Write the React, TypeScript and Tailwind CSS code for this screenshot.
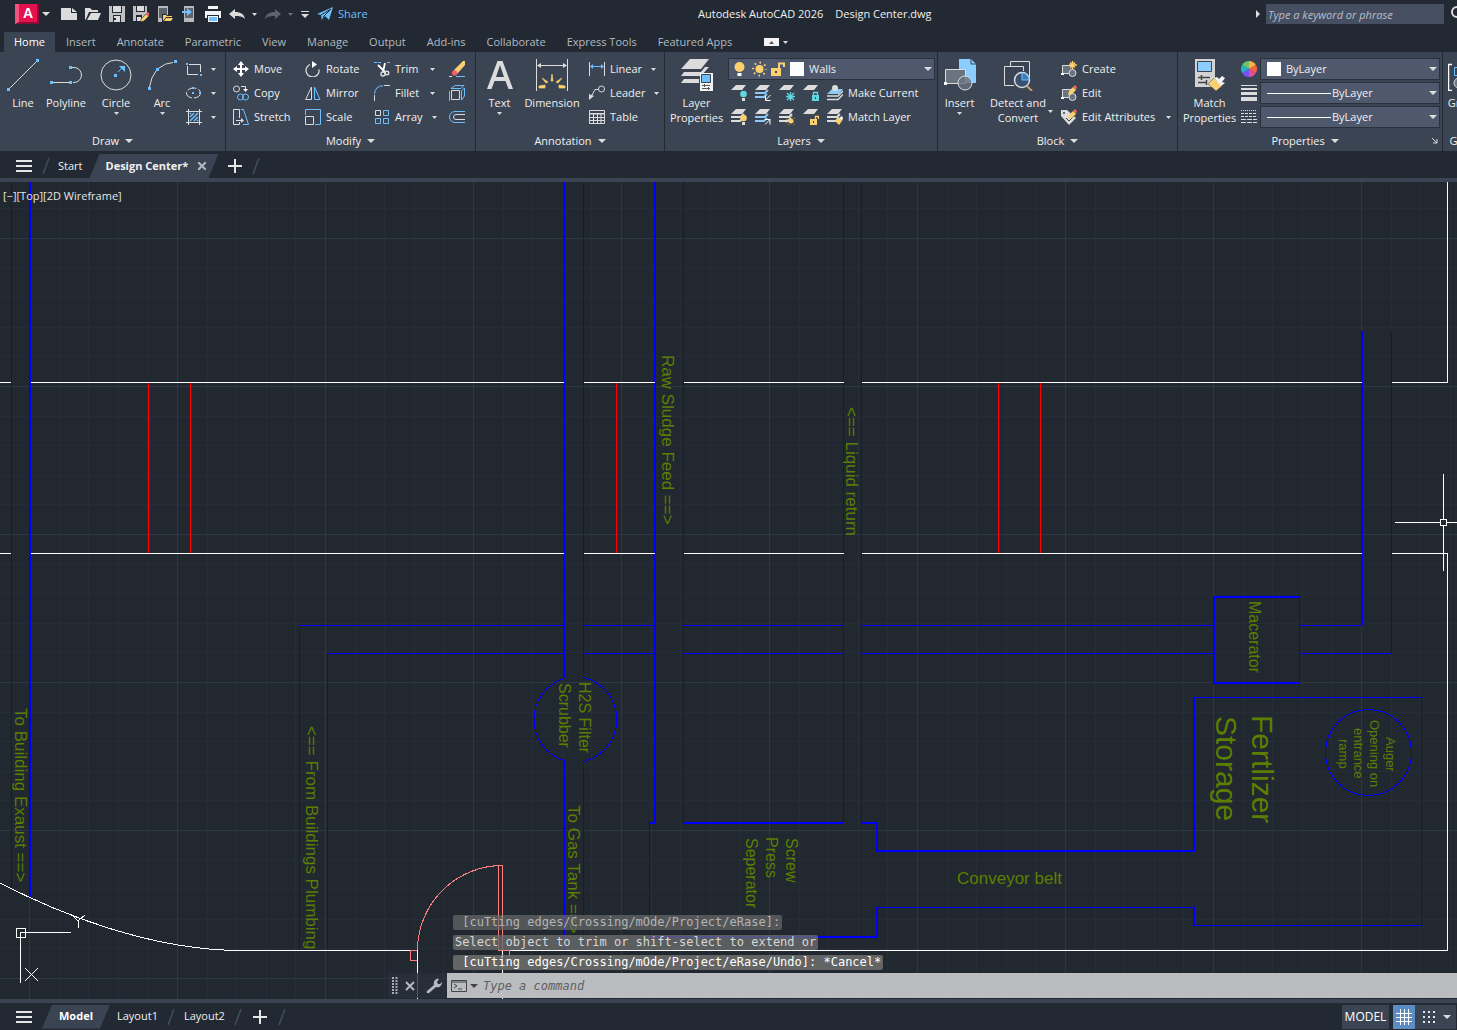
import type { ReactNode } from "react";

const W = "#dcdcdc";
const B = "#6cc0ff";
const Y = "#fcd06f";

function Svg({
	w = 16,
	h = 16,
	children,
	className = "",
}: {
	w?: number;
	h?: number;
	children: ReactNode;
	className?: string;
}) {
	return (
		<svg
			aria-hidden="true"
			width={w}
			height={h}
			viewBox={`0 0 ${w} ${h}`}
			fill="none"
			className={`shrink-0 ${className}`}
		>
			{children}
		</svg>
	);
}

function Caret({ big = false, dim = false }: { big?: boolean; dim?: boolean }) {
	const fill = dim ? "#6d737c" : W;
	return big ? (
		<Svg w={8} h={4}>
			<path d="M0 0h8L4 4z" fill={fill} />
		</Svg>
	) : (
		<Svg w={5} h={3}>
			<path d="M0 0h5L2.500 3z" fill={fill} />
		</Svg>
	);
}

/* ---------- title bar icons ---------- */

const quickIcons: { label: string; icon: ReactNode; caret?: "on" | "off" }[] = [
	{
		label: "New",
		icon: <path d="M0 2h10v5h6v7H0zM11 2l5 4h-5z" fill={W} />,
	},
	{
		label: "Open",
		icon: <path d="M0 14V2h5l2 2h6v2H4l-3 7zM2 14l4-7h10l-3 7z" fill={W} />,
	},
	{
		label: "Save",
		icon: (
			<>
				<path d="M0 0h16v16H0z" fill="#c0c0c2" />
				<path d="M3 0h10v7H3zM4 9h8v7H4z" fill="#222933" />
				<path d="M4 0h8v6H4zM5 10h6v6H5z" fill={W} />
				<path d="M5 12h2v2H5z" fill="#222933" />
			</>
		),
	},
	{
		label: "Save As",
		icon: (
			<>
				<path d="M0 0h14v8l-6 7H0z" fill="#c0c0c2" />
				<path d="M3 0h9v6H3zM3 9h6v6H3z" fill="#222933" />
				<path d="M4 0h7v5H4zM4 11h4v4H4z" fill={W} />
				<path d="M8 13l5-5 3 2-5 5-3 1z" fill={Y} stroke="#222933" strokeWidth=".6" />
				<path d="M13 8l2-2 2 2-1 2z" fill="#f2665c" />
			</>
		),
	},
	{
		label: "Open from Web and Mobile",
		icon: (
			<>
				<path d="M1 0h10v16H1z" fill="#b9b9bb" />
				<path d="M2 2h8v10H2z" fill="#5d636d" />
				<path d="M5 8h4l1 1h6v7H5z" fill="#222933" />
				<path d="M6 15V9h3l1 1h5v1H9zM7 15l2-3h7l-2 3z" fill={Y} />
			</>
		),
	},
	{
		label: "Save to Web and Mobile",
		icon: (
			<>
				<path d="M3 0h10v16H3z" fill="#b9b9bb" />
				<path d="M4 2h8v10H4z" fill="#5d636d" />
				<path d="M1 5h5V2l5 4-5 4V7H1z" fill={B} />
			</>
		),
	},
	{
		label: "Plot",
		icon: (
			<>
				<path d="M3 0h10v3H3zM0 5h16v7h-2V9H2v3H0z" fill="#f4f4f4" />
				<path d="M3 10h10v6H3z" fill="#f4f4f4" />
				<path d="M4 11h8v4H4z" fill={B} />
			</>
		),
	},
	{
		label: "Undo",
		icon: <path d="M0 8l6-5v3c6 0 9 2 10 7-3-3-6-3-10-3v3z" fill={W} />,
		caret: "on",
	},
	{
		label: "Redo",
		icon: <path d="M16 8l-6-5v3C4 6 1 8 0 13c3-3 6-3 10-3v3z" fill="#5d636d" />,
		caret: "off",
	},
];

function TitleBar() {
	return (
		<header className="flex h-8 items-start bg-[#222933] text-[#f0f0f0]">
			<div className="flex h-7 flex-13 items-center pl-[15px]">
				<button type="button" aria-label="Application menu" className="flex items-center gap-[3px]">
					<span className="flex h-5 w-6 items-center justify-center border-r-2 border-b-2 border-l-4 border-r-[#8c0b36] border-b-[#8c0b36] border-l-[#f0547d] bg-[#e51050] font-['Liberation_Sans'] text-sm leading-4 font-bold text-white">
						A
					</span>
					<Caret big />
				</button>
				<div className="ml-[11px] flex items-center gap-2">
					{quickIcons.map(({ label, icon, caret }) => (
						<button
							key={label}
							type="button"
							aria-label={label}
							className="flex items-center gap-[7px]"
						>
							<Svg>{icon}</Svg>
							{caret && <Caret dim={caret === "off"} />}
						</button>
					))}
					<button type="button" aria-label="Customize toolbar">
						<Svg w={8} h={7}>
							<path d="M0 0h8v1H0zM0 3h8L4 7z" fill={W} />
						</Svg>
					</button>
					<button type="button" className="flex items-center gap-[5px] text-[11px] text-[#6cc0ff]">
						<Svg>
							<path d="M0 8L16 1l-4 13-4-4-3 5-1-6z" fill={B} />
							<path d="M4 9l10-6-7 7-2 5" stroke="#222933" />
						</Svg>
						Share
					</button>
				</div>
			</div>
			<p className="flex h-7 shrink-0 items-center gap-3 text-[11px] whitespace-nowrap">
				<span>Autodesk AutoCAD 2026</span>
				<span>Design Center.dwg</span>
			</p>
			<div className="flex h-7 flex-10 items-center justify-end gap-1.5">
				<Svg w={4} h={8}>
					<path d="M0 0l4 4-4 4z" fill={W} />
				</Svg>
				<input
					aria-label="Search"
					placeholder="Type a keyword or phrase"
					className="h-5 w-[178px] bg-[#464e61] px-0.5 text-[11px] italic outline-none placeholder:text-[#b9bfc9]"
				/>
				<Svg w={7}>
					<circle cx="7" cy="6" r="5" stroke={W} strokeWidth="2" />
				</Svg>
			</div>
		</header>
	);
}

const ribbonTabs = [
	"Insert",
	"Annotate",
	"Parametric",
	"View",
	"Manage",
	"Output",
	"Add-ins",
	"Collaborate",
	"Express Tools",
	"Featured Apps",
];

function RibbonTabs() {
	return (
		<nav className="flex h-5 shrink-0 bg-[#222933] pl-1 text-[11px] text-[#b4b9c0]">
			<button type="button" className="w-[51px] bg-[#3b4453] text-white">
				Home
			</button>
			<div className="ml-[11px] flex gap-[21px]">
				{ribbonTabs.map((tab) => (
					<button key={tab} type="button">
						{tab}
					</button>
				))}
			</div>
			<button type="button" aria-label="Minimize ribbon" className="ml-8 flex items-center gap-1">
				<Svg w={15} h={8}>
					<path d="M0 0h15v8H0z" fill="#f4f4f4" />
					<path d="M5 6h5L7.500 3z" fill="#555" />
				</Svg>
				<Caret />
			</button>
		</nav>
	);
}

/* ---------- ribbon building blocks ---------- */

function Panel({
	title,
	width,
	launcher = false,
	children,
}: {
	title: string;
	width: string;
	launcher?: boolean;
	children: ReactNode;
}) {
	return (
		<section
			className={`flex shrink-0 flex-col border-r border-[#222933] pt-[5px] text-[11px] ${width}`}
		>
			<div className="flex h-[72px] shrink-0">{children}</div>
			<button
				type="button"
				className={`relative flex h-6 shrink-0 items-center justify-center gap-1.5 ${launcher ? "pr-2.5" : ""}`}
			>
				{title}
				<Caret big />
				{launcher && (
					<Svg w={6} h={6} className="absolute right-1">
						<path d="M0 0l5 5M5 1v4H1" stroke={W} />
					</Svg>
				)}
			</button>
		</section>
	);
}

function BigButton({
	icon,
	lines,
	width,
	caret = false,
	sideCaret = false,
}: {
	icon: ReactNode;
	lines: string[];
	width: string;
	caret?: boolean;
	sideCaret?: boolean;
}) {
	return (
		<button
			type="button"
			className={`relative flex shrink-0 flex-col items-center pt-0.5 ${width}`}
		>
			<Svg w={32} h={32}>
				{icon}
			</Svg>
			<span className="mt-1 leading-[15px]">
				{lines.map((line) => (
					<span key={line} className="block whitespace-nowrap">
						{line}
					</span>
				))}
			</span>
			{caret && (
				<span className="mt-0.5">
					<Caret />
				</span>
			)}
			{sideCaret && (
				<span className="absolute right-0.5 bottom-4">
					<Caret />
				</span>
			)}
		</button>
	);
}

function Tool({
	icon,
	label,
	hint,
	caret = false,
}: {
	icon: ReactNode;
	label?: string;
	hint?: string;
	caret?: boolean;
}) {
	return (
		<button
			type="button"
			aria-label={hint}
			className="flex h-6 items-center gap-[5px] whitespace-nowrap"
		>
			<Svg>{icon}</Svg>
			{label}
			{caret && (
				<span className="ml-auto pl-1">
					<Caret />
				</span>
			)}
		</button>
	);
}

function Stack({ width, children }: { width: string; children: ReactNode }) {
	return <div className={`flex shrink-0 flex-col ${width}`}>{children}</div>;
}

function Combo({
	label,
	value,
	children,
}: {
	label: string;
	value: string;
	children: ReactNode;
}) {
	return (
		<label className="flex h-[22px] flex-1 items-center gap-[3px] border border-[#2a313c] bg-[#4e596e] px-1">
			{children}
			<select
				aria-label={label}
				className="min-w-0 flex-1 appearance-none bg-transparent text-[11px] outline-none"
			>
				<option>{value}</option>
			</select>
			<span className="-mr-0.5">
				<Caret big />
			</span>
		</label>
	);
}

/* ---------- ribbon panels ---------- */

function DrawPanel() {
	return (
		<Panel title="Draw" width="w-[226px]">
			<BigButton
				width="w-[46px]"
				lines={["Line"]}
				icon={
					<>
						<path d="M3 29L29 3" stroke={W} />
						<path d="M0 29h3v3H0zM29 0h3v3h-3z" fill={B} />
					</>
				}
			/>
			<BigButton
				width="w-10"
				lines={["Polyline"]}
				icon={
					<>
						<path d="M3 23.500h16M22 8.500h2a7.500 7.500 0 0 1 0 15h-1" stroke={W} />
						<path d="M0 22h3v3H0zM19 22h3v3h-3zM19 7h3v3h-3z" fill={B} />
					</>
				}
			/>
			<BigButton
				width="w-[60px]"
				lines={["Circle"]}
				caret
				icon={
					<>
						<circle cx="16" cy="16" r="15" stroke={W} />
						<path d="M18 13l5-5" stroke={B} />
						<path d="M19 7h6v6zM14 15h3v3h-3z" fill={B} />
					</>
				}
			/>
			<BigButton
				width="w-8"
				lines={["Arc"]}
				caret
				icon={
					<>
						<path d="M3.500 28Q5 18 10 12M13 9Q19 4 27 3.500" stroke={W} />
						<path d="M2 28h3v3H2zM10 9h3v3h-3zM28 1h3v3h-3z" fill={B} />
					</>
				}
			/>
			<div className="ml-2 w-7">
				<Tool
					hint="Rectangle"
					caret
					icon={
						<>
							<path d="M3 3.500h11.500V11M12 13.500H1.500V5" stroke={W} />
							<path d="M0 2h2v2H0zM14 13h2v2h-2z" fill={B} />
						</>
					}
				/>
				<Tool
					hint="Ellipse"
					caret
					icon={
						<>
							<ellipse cx="7.500" cy="8" rx="7" ry="5" stroke={W} strokeDasharray="9 2" />
							<path d="M6 7h2v2H6zM6 2h2v2H6zM13 7h2v2h-2z" fill={B} />
						</>
					}
				/>
				<Tool
					hint="Hatch"
					caret
					icon={
						<>
							<path d="M2.500 0v16M13.500 0v16M0 2.500h16M0 13.500h16" stroke={W} />
							<path d="M4 8l4-4M4 12l8-8M8 12l4-4M4 5l1-1M11 12l1-1" stroke={B} strokeWidth="1.500" />
						</>
					}
				/>
			</div>
		</Panel>
	);
}

function ModifyPanel() {
	return (
		<Panel title="Modify" width="w-[250px]">
			<Stack width="ml-[7px] w-[72px]">
				<Tool
					label="Move"
					icon={
						<>
							<path d="M8 2v12M2 8h12" stroke="#fff" strokeWidth="2" />
							<path d="M5 4l3-4 3 4zM5 12l3 4 3-4zM4 5L0 8l4 3zM12 5l4 3-4 3z" fill="#fff" />
						</>
					}
				/>
				<Tool
					label="Copy"
					icon={
						<>
							<circle cx="3.500" cy="4" r="3" stroke={W} />
							<circle cx="7.500" cy="12" r="3" stroke={B} />
							<circle cx="12.500" cy="12" r="3" stroke={B} />
							<path d="M8 1.500h4.500V5" stroke={W} />
							<path d="M10 4h5l-2.500 3z" fill="#fff" />
						</>
					}
				/>
				<Tool
					label="Stretch"
					icon={
						<>
							<path d="M6.500 9V.500h-6v15h6V13M3 11.500h6" stroke={W} />
							<path d="M8 9l3 2.500L8 14z" fill={W} />
							<path d="M8 .500h2.500l5 15H10" stroke={B} />
						</>
					}
				/>
			</Stack>
			<Stack width="w-[69px]">
				<Tool
					label="Rotate"
					icon={
						<>
							<path d="M5 3.500a6.500 6.500 0 1 0 9 5" stroke={W} strokeWidth="1.300" />
							<path d="M7 0l5 3.500L7 7z" fill="#fff" />
						</>
					}
				/>
				<Tool
					label="Mirror"
					icon={
						<>
							<path d="M6.500 2v12.500H.700z" stroke={W} />
							<path d="M9.500 2v12.500h5.500z" stroke={B} />
						</>
					}
				/>
				<Tool
					label="Scale"
					icon={
						<>
							<path d="M.500 6V.500h15v15H10" stroke={B} />
							<path d="M.500 7.500h8v8h-8z" stroke={W} />
						</>
					}
				/>
			</Stack>
			<Stack width="w-[61px]">
				<Tool
					label="Trim"
					caret
					icon={
						<>
							<path d="M0 1.500h3M4 1.500h3M13 1.500h3" stroke={B} />
							<path d="M4 4l7 7M11 2L9 11" stroke="#fff" strokeWidth="1.800" />
							<circle cx="9" cy="13" r="2" stroke={W} strokeWidth="1.400" />
							<circle cx="13" cy="12" r="1.800" stroke={W} strokeWidth="1.400" />
						</>
					}
				/>
				<Tool
					label="Fillet"
					caret
					icon={
						<>
							<path d="M.500 9Q1 1 9 .700" stroke={B} />
							<path d="M.500 10v6M10 .500h6" stroke={W} />
						</>
					}
				/>
				<Tool
					label="Array"
					caret
					icon={
						<>
							<path d="M1.500 1.500h5v5h-5z" stroke={W} />
							<path d="M9.500 1.500h5v5h-5zM1.500 9.500h5v5h-5zM9.500 9.500h5v5h-5z" stroke={B} />
						</>
					}
				/>
			</Stack>
			<Stack width="ml-3.5 w-4">
				<Tool
					hint="Erase"
					icon={
						<>
							<path d="M5 9L14 0h2v4L8 13z" fill={Y} />
							<circle cx="5.500" cy="12" r="2.700" fill="#ee5f6b" />
							<path d="M0 15.500h3" stroke={W} />
							<path d="M7 15.500h9" stroke={B} />
						</>
					}
				/>
				<Tool
					hint="Explode"
					icon={
						<>
							<path d="M2.500 5.500h8v9h-8z" stroke={W} />
							<path d="M.500 6v10M2 3.500L6 .500h9l-3 3zM12.500 6L15.500 3v8l-3 4z" stroke={B} />
						</>
					}
				/>
				<Tool
					hint="Offset"
					icon={
						<>
							<path d="M16 2.500H6a5.500 5.500 0 0 0 0 11h10" stroke={B} />
							<path d="M16 5.500H7a2.500 2.500 0 0 0 0 5h9" stroke={W} />
						</>
					}
				/>
			</Stack>
		</Panel>
	);
}

function AnnotationPanel() {
	return (
		<Panel title="Annotation" width="w-[189px]">
			<BigButton
				width="w-[47px]"
				lines={["Text"]}
				caret
				icon={
					<path
						fillRule="evenodd"
						d="M3 30L13.500 2h5L29 30h-4.500l-3-8h-11l-3 8zM12 18h8L16 6z"
						fill={W}
					/>
				}
			/>
			<BigButton
				width="w-[58px]"
				lines={["Dimension"]}
				icon={
					<>
						<path d="M.500 0v32M31.500 0v32M3 6.500h26" stroke={W} />
						<path d="M1 6.500L5 4v5zM31 6.500L27 4v5z" fill={W} />
						<path
							d="M15 22l1-7 1 7zM10 24l-4-5 6 4zM22 24l4-5-6 4zM9 26l-6 1v2h6zM23 26l6 1v2h-6z"
							fill={Y}
							stroke={Y}
							strokeWidth=".700"
						/>
					</>
				}
			/>
			<Stack width="ml-2 w-[66px]">
				<Tool
					label="Linear"
					caret
					icon={
						<>
							<path d="M.500 1v14M15.500 1v14" stroke={W} />
							<path d="M2 5.500h12" stroke={B} />
							<path d="M1 5.500L4 3v5zM15 5.500L12 3v5z" fill={B} />
						</>
					}
				/>
				<Tool
					label="Leader"
					caret
					icon={
						<>
							<circle cx="12.500" cy="4" r="3" stroke={W} />
							<path d="M9 4.500H6L2 12" stroke={W} />
							<path d="M0 9l5 2-5 4z" fill={W} />
						</>
					}
				/>
				<Tool
					label="Table"
					icon={
						<>
							<path
								d="M.500 1.500h15v13H.500zM0 8.500h16M0 11.500h16M4.500 5v9M8.500 5v9M12 5v9"
								stroke={W}
							/>
							<path d="M0 4h16v1.500H0z" fill={W} />
						</>
					}
				/>
			</Stack>
		</Panel>
	);
}

function Sheets({ n = 3, active = false }: { n?: number; active?: boolean }) {
	return (
		<>
			{n > 1 && (
				<path
					d="M0 8h10l3-3M0 12h9l3-3"
					stroke={active ? "#8cc9f5" : W}
					strokeWidth="2"
				/>
			)}
			<path d="M5 0h10l-4 5H0z" fill={W} />
		</>
	);
}

const cyan = "#5fd6e0";

const layerTools: { hint: string; icon: ReactNode }[][] = [
	[
		{
			hint: "Layer off",
			icon: (
				<>
					<Sheets n={1} />
					<circle cx="12.500" cy="9" r="3.300" fill={cyan} />
					<path d="M11 13h3v3h-3z" fill={W} />
				</>
			),
		},
		{
			hint: "Isolate layer",
			icon: (
				<>
					<Sheets active />
					<path d="M15.500 10l-5 5m0-4v4.500h5" stroke="#fff" />
				</>
			),
		},
		{
			hint: "Freeze layer",
			icon: (
				<>
					<Sheets n={1} />
					<path d="M11.500 7v9M7 11.500h9M8 8l7 7M15 8l-7 7" stroke={cyan} strokeWidth="1.300" />
				</>
			),
		},
		{
			hint: "Lock layer",
			icon: (
				<>
					<Sheets n={1} />
					<path d="M9 10h7v6H9z" fill={cyan} />
					<path d="M10.500 10V7.500h4V10" stroke={cyan} strokeWidth="1.300" />
					<path d="M12 12h1v2h-1z" fill="#3b4453" />
				</>
			),
		},
	],
	[
		{
			hint: "Turn all layers on",
			icon: (
				<>
					<Sheets />
					<circle cx="12.500" cy="9" r="3.300" fill={Y} />
					<path d="M11 13h3v3h-3z" fill={W} />
				</>
			),
		},
		{
			hint: "Unisolate layer",
			icon: (
				<>
					<Sheets active />
					<path d="M10 15.500l5-5m0 5v-5h-5" stroke="#fff" />
				</>
			),
		},
		{
			hint: "Thaw all layers",
			icon: (
				<>
					<Sheets />
					<circle cx="12" cy="12" r="4.500" stroke={Y} strokeDasharray="1 2" />
					<circle cx="12" cy="12" r="2.500" fill={Y} />
				</>
			),
		},
		{
			hint: "Unlock layer",
			icon: (
				<>
					<Sheets n={1} />
					<path d="M7 10h7v6H7z" fill={Y} />
					<path d="M12.500 10V7.500h3V10" stroke={Y} strokeWidth="1.300" />
					<path d="M10 12h1v2h-1z" fill="#3b4453" />
				</>
			),
		},
	],
];

function LayersPanel() {
	return (
		<Panel title="Layers" width="w-[273px]">
			<BigButton
				width="w-[63px]"
				lines={["Layer", "Properties"]}
				icon={
					<>
						<path d="M9 0h19l-8 10H0z" fill={W} />
						<path d="M0 17l3-4h17l4-5h4l-8 9zM0 24l3-4h15v4z" fill={W} />
						<path d="M19 14h13v18H19z" fill="#f4f4f4" />
						<path d="M20.500 15.500h9v8h-9z" fill={B} stroke="#3b4453" />
						<path d="M21 26.500h8M21 29.500h8M23.500 25v3M27.500 28v3" stroke="#555" />
					</>
				}
			/>
			<div className="flex flex-1 flex-col pr-0.5">
				<div className="flex h-6 items-center">
					<Combo label="Layer" value="Walls">
						<Svg w={16} h={16}>
							<circle cx="6.500" cy="6" r="5" fill={Y} />
							<path d="M4.500 12h4v3h-4z" fill="#fff" />
						</Svg>
						<Svg w={15} h={16}>
							<circle cx="7.500" cy="8" r="4" fill={Y} />
							<circle
								cx="7.500"
								cy="8"
								r="6.500"
								stroke={Y}
								strokeWidth="2"
								strokeDasharray="1.500 3.600"
								strokeDashoffset=".750"
							/>
						</Svg>
						<Svg w={15} h={16}>
							<path d="M1 7h10v8H1z" fill={Y} />
							<path d="M9 7V2.500h5V6" stroke={Y} strokeWidth="2" />
							<path d="M5 10h2v2H5z" fill="#3b4453" />
						</Svg>
						<span className="mx-0.5 h-3.5 w-3.5 bg-white" />
					</Combo>
				</div>
				<div className="flex gap-2 pl-[3px]">
					{layerTools[0].map((tool) => (
						<Tool key={tool.hint} {...tool} />
					))}
					<Tool
						label="Make Current"
						icon={
							<>
								<path d="M5 4h11l-4 5H0z" fill="#8cc9f5" />
								<path d="M0 11h11l5-5M0 14.500h11l5-5" stroke={W} strokeWidth="1.500" />
								<circle cx="8" cy="3" r="3" fill={W} />
							</>
						}
					/>
				</div>
				<div className="flex gap-2 pl-[3px]">
					{layerTools[1].map((tool) => (
						<Tool key={tool.hint} {...tool} />
					))}
					<Tool
						label="Match Layer"
						icon={
							<>
								<Sheets />
								<path d="M8 12l3-4 4 4-3 4z" fill={Y} />
								<path d="M12 9l3-2 1 2-1 3z" fill="#fff" />
							</>
						}
					/>
				</div>
			</div>
		</Panel>
	);
}

function BlockPanel() {
	const base = (
		<>
			<path d="M1.500 4.500h10v8h-10z" fill="#6b7280" stroke={W} />
			<circle cx="11.500" cy="12" r="3.500" fill="#6b7280" stroke={W} />
			<path d="M0 12h3v2H0z" fill="#fff" />
		</>
	);
	const pencil = (
		<>
			<path d="M7 10l1-4 4-4 3 3-4 4z" fill={Y} />
			<path d="M12 2l2-2 2 2-1 3z" fill="#f2665c" />
		</>
	);
	return (
		<Panel title="Block" width="w-[240px]">
			<BigButton
				width="w-[43px]"
				lines={["Insert"]}
				caret
				icon={
					<>
						<path d="M15 0h12l5 5v19H15z" fill="#8ccdff" />
						<path d="M27 0v5h5" stroke="#3b4453" />
						<path d="M1.500 10.500h20v14h-20z" fill="#6b7280" stroke={W} />
						<circle cx="21" cy="24" r="7" fill="#6b7280" fillOpacity=".8" stroke={W} />
						<path d="M0 23h3v3H0z" fill="#fff" />
					</>
				}
			/>
			<BigButton
				width="w-[74px]"
				lines={["Detect and", "Convert"]}
				sideCaret
				icon={
					<>
						<path d="M12 26.500H2.500v-19h19V12M8.500 7V2.500h19V18" stroke={W} />
						<circle cx="20" cy="21" r="7.500" fill="#365172" stroke={W} strokeWidth="1.500" />
						<path d="M20 21V14a7 7 0 0 1 7 7z" fill="#3f7cb5" stroke={B} />
						<path d="M25 27l5 5" stroke="#c99a62" strokeWidth="2" />
					</>
				}
			/>
			<Stack width="ml-1.5 w-[110px]">
				<Tool
					label="Create"
					icon={
						<>
							{base}
							<path
								d="M11.500 0v8M8 4h8M9 1.500l5 5M14 1.500l-5 5"
								stroke={Y}
								strokeWidth="1.400"
							/>
						</>
					}
				/>
				<Tool
					label="Edit"
					icon={
						<>
							{base}
							{pencil}
						</>
					}
				/>
				<Tool
					label="Edit Attributes"
					caret
					icon={
						<>
							<path d="M0 1h6l9 8-7 7-8-9z" fill={W} />
							<circle cx="3" cy="4" r="1" fill="#3b4453" />
							<path d="M5 9l3 3 5-5" stroke="#3b4453" />
							{pencil}
						</>
					}
				/>
			</Stack>
		</Panel>
	);
}

const wheel = [
	{ d: "M8 8V0A8 8 0 0 1 14.900 4z", fill: "#fbb040" },
	{ d: "M8 8L14.900 4A8 8 0 0 1 14.900 12z", fill: "#f06449" },
	{ d: "M8 8L14.900 12A8 8 0 0 1 8 16z", fill: "#e0508c" },
	{ d: "M8 8V16A8 8 0 0 1 1.100 12z", fill: "#7c4dff" },
	{ d: "M8 8L1.100 12A8 8 0 0 1 1.100 4z", fill: "#23b5c7" },
	{ d: "M8 8L1.100 4A8 8 0 0 1 8 0z", fill: "#6cc46a" },
];

function PropertiesPanel() {
	return (
		<Panel title="Properties" width="w-[265px]" launcher>
			<BigButton
				width="w-[63px]"
				lines={["Match", "Properties"]}
				icon={
					<>
						<path d="M1 0h20v28H1z" fill="#d3d3d3" />
						<path d="M3.500 2.500h14v10h-14z" fill="#8ccdff" stroke="#3b4453" />
						<path d="M4 18.500h12M4 23.500h9M7.500 16v5M12.500 21v5" stroke="#444" strokeWidth="1.500" />
						<path d="M14 25l6-6 8 8-6 5z" fill={Y} stroke="#3b4453" strokeWidth=".5" />
						<path d="M20 19l3-1 2 2 3-3 3 2-3 4 3 1-4 3z" fill="#f4f4f4" />
					</>
				}
			/>
			<div className="flex flex-1 flex-col pr-0.5">
				<div className="flex h-6 items-center gap-[3px]">
					<Svg>
						{wheel.map((slice) => (
							<path key={slice.d} {...slice} />
						))}
					</Svg>
					<Combo label="Object color" value="ByLayer">
						<span className="mx-0.5 h-3.5 w-3.5 bg-white" />
					</Combo>
				</div>
				<div className="flex h-6 items-center gap-[3px]">
					<Svg>
						<path d="M0 .500h16" stroke={W} />
						<path d="M0 3h16v2H0zM0 7h16v3H0zM0 12h16v4H0z" fill={W} />
					</Svg>
					<Combo label="Lineweight" value="ByLayer">
						<Svg w={64} h={1} className="ml-0.5 -mr-0.5">
							<path d="M0 .500h64" stroke="#fff" />
						</Svg>
					</Combo>
				</div>
				<div className="flex h-6 items-center gap-[3px]">
					<Svg>
						<path d="M0 1.500h16" stroke={W} strokeDasharray="1 1" />
						<path d="M0 4.500h16M0 7.500h16" stroke={W} strokeDasharray="3 1" />
						<path d="M0 10.500h16M0 13.500h16" stroke={W} strokeDasharray="5 1" />
					</Svg>
					<Combo label="Linetype" value="ByLayer">
						<Svg w={64} h={1} className="ml-0.5 -mr-0.5">
							<path d="M0 .500h64" stroke="#fff" />
						</Svg>
					</Combo>
				</div>
			</div>
		</Panel>
	);
}

function Ribbon() {
	return (
		<div className="flex h-[99px] shrink-0 overflow-hidden bg-[#3b4453] text-[#f0f0f0]">
			<DrawPanel />
			<ModifyPanel />
			<AnnotationPanel />
			<LayersPanel />
			<BlockPanel />
			<PropertiesPanel />
			<Panel title="Groups" width="w-[66px]">
				<BigButton
					width="w-[42px]"
					lines={["Group"]}
					icon={
						<>
							<path d="M4 5.500H.500v26H4" stroke="#fff" strokeWidth="1.500" />
							<path d="M6.500 8.500h12v8h-12z" stroke={B} />
							<circle cx="11" cy="24" r="5" fill="#6b7280" stroke={W} />
						</>
					}
				/>
			</Panel>
		</div>
	);
}

/* ---------- tab strips ---------- */

function Hamburger() {
	return (
		<Svg>
			<path d="M0 2h16v2H0zM0 7h16v2H0zM0 12h16v2H0z" fill="#e6e6e6" />
		</Svg>
	);
}

function Slash() {
	return (
		<Svg w={8} h={16}>
			<path d="M7 0L1 16" stroke="#444c59" strokeWidth="1.500" />
		</Svg>
	);
}

function Plus() {
	return (
		<Svg w={14} h={14}>
			<path d="M7 0v14M0 7h14" stroke="#e6e6e6" strokeWidth="2" />
		</Svg>
	);
}

const slant = "[clip-path:polygon(10px_0,100%_0,calc(100%-10px)_100%,0_100%)]";

function FileTabs() {
	return (
		<nav className="flex h-[31px] shrink-0 items-end border-b-4 border-[#3b4453] bg-[#222933] pl-4 text-[11px] text-[#f0f0f0]">
			<button type="button" aria-label="Files menu" className="flex h-6 items-center">
				<Hamburger />
			</button>
			<div className="flex h-6 items-center gap-2 pl-2.5">
				<Slash />
				<button type="button">Start</button>
			</div>
			<div className={`ml-[7px] flex h-6 w-[129px] items-center gap-2.5 bg-[#3b4453] pl-4 ${slant}`}>
				<button type="button" className="font-bold whitespace-nowrap">
					Design Center*
				</button>
				<button type="button" aria-label="Close tab">
					<Svg w={8} h={8}>
						<path d="M0 0l8 8M8 0L0 8" stroke="#b4b9c0" strokeWidth="2" />
					</Svg>
				</button>
			</div>
			<div className="flex h-6 items-center gap-2.5 pl-2.5">
				<button type="button" aria-label="New drawing">
					<Plus />
				</button>
				<Slash />
			</div>
		</nav>
	);
}

function StatusBar() {
	return (
		<footer className="flex h-[31px] shrink-0 items-center border-t-4 border-[#3b4453] bg-[#222933] pl-4 text-[11px] text-[#f0f0f0]">
			<button type="button" aria-label="Layouts menu">
				<Hamburger />
			</button>
			<button
				type="button"
				className={`ml-2.5 h-6 w-[68px] bg-[#3b4453] font-bold text-white ${slant}`}
			>
				Model
			</button>
			<div className="flex items-center gap-[9px] pl-[7px]">
				<button type="button">Layout1</button>
				<Slash />
				<button type="button">Layout2</button>
				<Slash />
				<button type="button" aria-label="New layout" className="px-0.5">
					<Plus />
				</button>
				<Slash />
			</div>
			<div className="ml-auto flex items-center pr-px">
				<button type="button" className="h-6 w-[47px] bg-[#3b4453] text-xs text-white">
					MODEL
				</button>
				<button
					type="button"
					aria-label="Show grid"
					className="ml-1 flex h-6 w-[22px] items-center justify-center bg-[#5b8cc4]"
				>
					<Svg>
						<path
							d="M4.500 0v16M8.500 0v16M12.500 0v16M0 4.500h16M0 8.500h16M0 12.500h16"
							stroke="#fff"
						/>
					</Svg>
				</button>
				<button
					type="button"
					aria-label="Snap mode"
					className="flex h-6 items-center gap-2 bg-[#3b4453] pr-[5px] pl-2"
				>
					<Svg w={12} h={12}>
						<path
							d="M0 1h12M0 6h12M0 11h12"
							stroke="#e6e6e6"
							strokeWidth="2"
							strokeDasharray="2 3"
						/>
					</Svg>
					<Caret big />
				</button>
			</div>
		</footer>
	);
}

/* ---------- drawing area ---------- */

const labels: { text: string; x: number; y: number; size: number }[] = [
	{ text: "To Building Exaust ==>", x: 15, y: 708, size: 17 },
	{ text: "<== From Buildings Plumbing", x: 306, y: 726, size: 17 },
	{ text: "Raw Sludge Feed  ==>", x: 662, y: 355, size: 17 },
	{ text: "<==  Liquid return", x: 846, y: 407, size: 17 },
	{ text: "H2S Filter", x: 579, y: 682, size: 16 },
	{ text: "Scrubber", x: 559, y: 683, size: 16 },
	{ text: "To Gas Tank ==>", x: 568, y: 805, size: 17 },
	{ text: "Screw", x: 786, y: 838, size: 16 },
	{ text: "Press", x: 766, y: 837, size: 16 },
	{ text: "Seperator", x: 746, y: 838, size: 16 },
	{ text: "Macerator", x: 1249, y: 601, size: 16 },
	{ text: "Fertlizer", x: 1252, y: 715, size: 30 },
	{ text: "Storage", x: 1216, y: 716, size: 30 },
	{ text: "Auger", x: 1386, y: 737, size: 13 },
	{ text: "Opening on", x: 1370, y: 720, size: 13 },
	{ text: "entrance", x: 1354, y: 728, size: 13 },
	{ text: "ramp", x: 1339, y: 739, size: 13 },
];

function Drawing() {
	return (
		<svg aria-label="Drawing" className="absolute inset-0 h-full w-full" fill="none">
			<defs>
				<pattern id="grid" x="29" y="90" width="148" height="148" patternUnits="userSpaceOnUse">
					<path
						d="M30.500 0v148M59.500 0v148M89.500 0v148M118.500 0v148M0 30.500h148M0 59.500h148M0 89.500h148M0 118.500h148"
						stroke="#272d38"
					/>
					<path d="M.500 0v148M0 .500h148" stroke="#303744" />
				</pattern>
			</defs>
			<g transform="translate(0 -182)" shapeRendering="crispEdges">
				<rect y="182" width="100%" height="100%" fill="url(#grid)" />
				{/* pipes */}
				<path
					stroke="#0000ff"
					d="M11.500 182V889M583.500 182V677M583.500 761V950M649.500 822V937M683.500 182V822M843.500 182V822M861.500 182V822M299.500 950V625.500H563M583 625.500H654M683 625.500H843M861 625.500H1214M327.500 950V653.500H563M583 653.500H654M683 653.500H843M861 653.500H1214M1299 625.500H1362M1299 653.500H1391.500V331M1194 697.500H1421.500V925.500H1194M877 907.500H1194M1299.500 596V682"
				/>
				<path
					stroke="#0000ff"
					strokeWidth="2"
					d="M30 182V898M564 182V678M564 760V950M655 182V823M649 823H655M683 823H843M861 823H877V851H1194V697M1194 907V926M877 907V937H649M1362 331V625M1214 682V597H1300M1213 683H1300"
				/>
				<path
					stroke="#0000ff"
					d="M564 678.500A43 43 0 0 0 564 760.500M583 677.500A43 43 0 0 1 583 761.500"
				/>
				<circle cx="1368.500" cy="752.500" r="43" stroke="#0000ff" />
				{/* columns */}
				<path
					stroke="#ff0000"
					d="M148.500 383V553M190.500 383V553M616.500 383V553M998.500 383V553M1040.500 383V553"
				/>
				{/* walls */}
				<path
					stroke="#ffffff"
					d="M0 382.500H11M31 382.500H564M584 382.500H655M684 382.500H844M862 382.500H1362M1392 382.500H1447.500V182M0 553.500H11M31 553.500H564M584 553.500H655M684 553.500H844M862 553.500H1362M1392 553.500H1447.500V950.500H502.500V999M0 883C60 914 150 950 240 950.500H417.500V999"
				/>
				{/* door */}
				<path
					stroke="#ff7f7f"
					d="M417.500 950A85 85 0 0 1 502.500 865.500V950.500H498.500V865.500M417 950.500H410.500V960.500H417M502 950.500H509.500V957"
				/>
				{/* axis marker */}
				<path
					stroke="#ffffff"
					d="M16.500 928.500h9v9h-9zM71 932.500H20.500V983M25 968l13 13M38 968l-13 13M72 915l6 6 7-6M78.500 921v7"
				/>
				{/* cursor */}
				<path
					stroke="#ffffff"
					d="M1440.500 519.500h6v6h-6zM1395 522.500H1440M1447 522.500H1457M1443.500 474V519M1443.500 526V571"
				/>
			</g>
			<g
				transform="translate(0 -182)"
				fill="#5c7f00"
				className="font-['Liberation_Sans',Arial,sans-serif]"
			>
				{labels.map(({ text, x, y, size }) => (
					<text key={text} transform={`translate(${x} ${y}) rotate(90)`} fontSize={size}>
						{text}
					</text>
				))}
				<text x="957" y="884" fontSize="17">
					Conveyor belt
				</text>
			</g>
		</svg>
	);
}

const history = [
	{ text: " [cuTting edges/Crossing/mOde/Project/eRase]:", tone: "bg-[#6a6a6a]/70 text-[#b4b4b4]" },
	{ text: "Select object to trim or shift-select to extend or", tone: "bg-[#6a6a6a]/80 text-[#d8d8d8]" },
	{ text: " [cuTting edges/Crossing/mOde/Project/eRase/Undo]: *Cancel*", tone: "bg-[#6a6a6a]/90 text-white" },
];

function CommandLine() {
	return (
		<div className="absolute right-0 bottom-px left-[388px] font-['DejaVu_Sans_Mono',monospace] text-xs">
			<ul className="mb-[3px] ml-[65px] flex flex-col items-start gap-[5px]">
				{history.map(({ text, tone }) => (
					<li key={text} className={`rounded-xs px-0.5 leading-[15px] whitespace-pre ${tone}`}>
						{text}
					</li>
				))}
			</ul>
			<div className="flex h-[25px] items-stretch bg-[#2a303c]/80">
				<div className="flex w-[59px] items-center pl-1">
					<Svg w={6} h={18}>
						<path d="M1 0v18M4.500 0v18" stroke="#a9adb3" strokeWidth="2" strokeDasharray="2 1" />
					</Svg>
					<button type="button" aria-label="Close command line" className="ml-[7px]">
						<Svg w={10} h={10}>
							<path d="M1 1l8 8M9 1L1 9" stroke="#b4b9c0" strokeWidth="2" />
						</Svg>
					</button>
					<button type="button" aria-label="Customize" className="ml-[11px]">
						<Svg>
							<path
								d="M1 13L8 7C7 3 10 0 13 1l-2 3 1 2h2l2-2c0 4-3 6-6 5l-7 6c-2 1-3-1-2-2z"
								fill="#b4b9c0"
							/>
						</Svg>
					</button>
				</div>
				<div className="flex flex-1 items-center gap-[3px] bg-[#c3c4c6]/95 pl-1">
					<Svg w={16} h={12}>
						<path d="M.500 .500h15v11H.500zM0 2h16M3 4l3 2-3 2M7 9h4" stroke="#444" />
					</Svg>
					<Svg w={8} h={4}>
						<path d="M0 0h8L4 4z" fill="#444" />
					</Svg>
					<input
						aria-label="Command"
						placeholder="Type a command"
						className="min-w-0 flex-1 bg-transparent pl-0.5 italic outline-none placeholder:text-[#5e5f62]"
					/>
				</div>
			</div>
		</div>
	);
}

export default function App() {
	return (
		<div className="flex h-screen flex-col overflow-hidden bg-[#222933] font-['Open_Sans','Noto_Sans',sans-serif]">
			<TitleBar />
			<RibbonTabs />
			<Ribbon />
			<FileTabs />
			<main className="relative min-h-0 flex-1 overflow-hidden bg-[#212830]">
				<Drawing />
				<p className="relative pt-1.5 pl-[3px] text-[11px] text-[#e6e6e6]">
					[−][Top][2D Wireframe]
				</p>
				<CommandLine />
			</main>
			<StatusBar />
		</div>
	);
}
